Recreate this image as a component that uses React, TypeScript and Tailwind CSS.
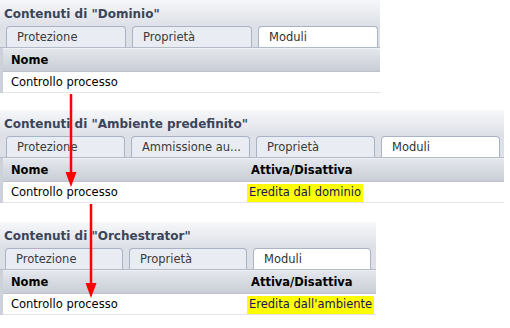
import React from "react";

const FONT = { fontFamily: "'DejaVu Sans', 'Liberation Sans', sans-serif" };

type Props = {
  title: string;
  width: number;
  tabs: string[];
  tabW: string;
  tabStart: string;
  value?: string;
};

function Panel({ title, tabs, tabW, tabStart, value, width }: Props) {
  return (
    <div style={{ width }} className="flex flex-col">
      <div className="h-[26px] bg-gradient-to-b from-[#f6f7f9] to-[#dde0e7] pl-[4px] text-[12px] font-bold leading-[28px] text-[#3b4559]">
        {title}
      </div>
      <div className={`flex h-[22px] gap-[6px] border-b border-[#b3bbc9] bg-[#dde0e7] ${tabStart}`}>
        {tabs.map((t, i) => {
          const active = i === tabs.length - 1;
          return (
            <div
              key={t}
              className={`${tabW} h-[21px] rounded-t-[4px] border border-b-0 border-[#aab3c4] pl-[10px] text-[11.5px] leading-[20px] whitespace-nowrap ${
                active ? "bg-white text-[#333]" : "bg-[#e9ecf3] text-[#3a3a3a]"
              }`}
            >
              {t}
            </div>
          );
        })}
      </div>
      <div className="border-l-[3px] border-[#cdd1d9]">
        <div className="flex h-[24px] border-t border-[#eef0f4] border-b border-b-[#bcc1cb] bg-gradient-to-b from-[#e4e7ec] to-[#c9cdd6] text-[11.5px] font-bold leading-[22px] text-black">
          <div className="w-[244px] shrink-0 pl-[8px]">Nome</div>
          {value && <div className="whitespace-nowrap pl-[4px]">Attiva/Disattiva</div>}
        </div>
        <div className="flex h-[21px] border-b border-[#e4e4e4] bg-white text-[11.5px] text-black">
          <div className="w-[244px] shrink-0 pl-[8px] leading-[21px]">Controllo processo</div>
          {value && (
            <div className="flex items-end">
              <span className="h-[18px] whitespace-nowrap bg-[#ffff00] px-[2px] leading-[17px] text-[#14145a]">
                {value}
              </span>
            </div>
          )}
        </div>
      </div>
    </div>
  );
}

export default function App() {
  return (
    <div className="relative h-[328px] w-[510px] bg-white" style={FONT}>
      <Panel
        title={'Contenuti di "Dominio"'}
        width={380}
        tabs={["Protezione", "Proprietà", "Moduli"]}
        tabW="w-[120px]"
        tabStart="pl-[6px]"
      />
      <div className="mt-[17px]">
        <Panel
          title={'Contenuti di "Ambiente predefinito"'}
          width={504}
          tabs={["Protezione", "Ammissione au...", "Proprietà", "Moduli"]}
          tabW="w-[119px]"
          tabStart="pl-[6px]"
          value="Eredita dal dominio"
        />
      </div>
      <div className="mt-[19px]">
        <Panel
          title={'Contenuti di "Orchestrator"'}
          width={376}
          tabs={["Protezione", "Proprietà", "Moduli"]}
          tabW="w-[118px]"
          tabStart="pl-[5px]"
          value="Eredita dall'ambiente"
        />
      </div>
      <svg className="pointer-events-none absolute left-0 top-0" width="510" height="328">
        <line x1="71" y1="94" x2="71" y2="174" stroke="#ff0000" strokeWidth="2.5" />
        <polygon points="65.5,172 76.5,172 71,187" fill="#ff0000" />
        <line x1="91" y1="204" x2="91" y2="285" stroke="#ff0000" strokeWidth="2.5" />
        <polygon points="85.5,283 96.5,283 91,298" fill="#ff0000" />
      </svg>
    </div>
  );
}
